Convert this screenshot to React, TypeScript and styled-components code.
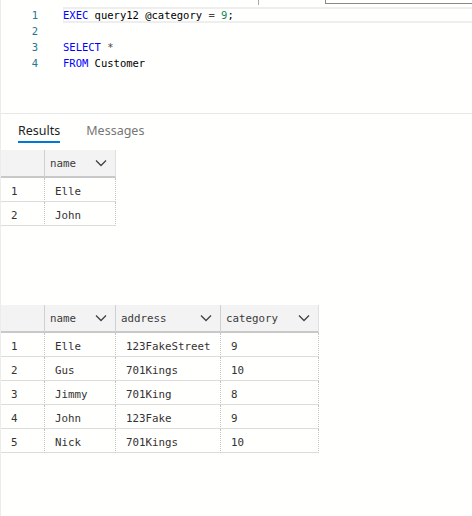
import React from 'react';
import styled, { createGlobalStyle } from 'styled-components';

const GlobalStyle = createGlobalStyle`
  html, body {
    margin: 0;
    padding: 0;
    background: #fffffe;
  }
`;

const mono = `"DejaVu Sans Mono", "Liberation Mono", monospace`;

interface Column {
  title: string,
  width: number
}

interface Grid {
  columns: Column[],
  rows: string[][]
}

const firstGrid: Grid = {
  columns: [{ title: 'name', width: 71 }],
  rows: [['Elle'], ['John']]
};

const secondGrid: Grid = {
  columns: [
    { title: 'name', width: 71 },
    { title: 'address', width: 105 },
    { title: 'category', width: 98 }
  ],
  rows: [
    ['Elle', '123FakeStreet', '9'],
    ['Gus', '701Kings', '10'],
    ['Jimmy', '701King', '8'],
    ['John', '123Fake', '9'],
    ['Nick', '701Kings', '10']
  ]
};

const Chevron = () => (
  <svg width="12" height="8" viewBox="0 0 12 8" fill="none">
    <path d="M1 1.5 L6 6.5 L11 1.5" stroke="#424242" strokeWidth="1.3" />
  </svg>
);

const DataGrid = ({ grid }: { grid: Grid }) => (
  <Table>
    <colgroup>
      <col style={{ width: 44 }} />
      {grid.columns.map(col => (
        <col key={col.title} style={{ width: col.width }} />
      ))}
    </colgroup>
    <thead>
      <tr>
        <HeadCell>
          <HeadInner />
        </HeadCell>
        {grid.columns.map(col => (
          <HeadCell key={col.title}>
            <HeadInner>
              <span>{col.title}</span>
              <Chevron />
            </HeadInner>
          </HeadCell>
        ))}
      </tr>
    </thead>
    <tbody>
      {grid.rows.map((row, i) => (
        <tr key={i}>
          <Cell>{i + 1}</Cell>
          {row.map((value, j) => (
            <Cell key={j}>{value}</Cell>
          ))}
        </tr>
      ))}
    </tbody>
  </Table>
);

export default function App() {
  return (
    <Page>
      <GlobalStyle />
      <FindEdge />
      <FindBox />
      <Editor>
        <Line>
          <LineNo>1</LineNo>
          <Code current>
            <Kw>EXEC</Kw> query12 @category <Op>=</Op> <Num>9</Num>;
          </Code>
        </Line>
        <Line>
          <LineNo>2</LineNo>
          <Code />
        </Line>
        <Line>
          <LineNo>3</LineNo>
          <Code>
            <Kw>SELECT</Kw> <Op>*</Op>
          </Code>
        </Line>
        <Line>
          <LineNo>4</LineNo>
          <Code>
            <Kw>FROM</Kw> Customer
          </Code>
        </Line>
      </Editor>
      <Results>
        <Tabs>
          <Tab active>Results</Tab>
          <Tab>Messages</Tab>
        </Tabs>
        <DataGrid grid={firstGrid} />
        <Spacer />
        <DataGrid grid={secondGrid} />
      </Results>
    </Page>
  );
}

const Page = styled.div`
  position: relative;
  width: 471px;
  height: 516px;
  border-left: 1px solid #ececec;
  overflow: hidden;
  background: #fffffe;
`;

const FindEdge = styled.div`
  position: absolute;
  left: 257px;
  top: 0;
  width: 1px;
  height: 5px;
  background: #a8a8a8;
`;

const FindBox = styled.div`
  position: absolute;
  left: 324px;
  top: -2px;
  right: -2px;
  height: 5px;
  border-left: 1px solid #8a8a8a;
  border-bottom: 1px solid #8a8a8a;
`;

const Editor = styled.div`
  height: 106px;
  padding-top: 7px;
  border-bottom: 1px solid #e8e8e8;
  font-family: ${mono};
  font-size: 10.5px;
`;

const Line = styled.div`
  display: flex;
  height: 16px;
  align-items: stretch;
`;

const LineNo = styled.div`
  width: 37px;
  text-align: right;
  color: #237893;
  line-height: 16px;
  flex-shrink: 0;
`;

const Code = styled.div<{ current?: boolean }>`
  margin-left: 25px;
  flex: 1;
  line-height: 16px;
  white-space: pre;
  color: #000;
  box-shadow: ${props => props.current ? 'inset 0 2px 0 #eeeeee, inset 0 -2px 0 #eeeeee, inset 1px 0 0 #eeeeee' : 'none'};
`;

const Kw = styled.span`
  color: #0000ff;
`;

const Op = styled.span`
  color: #444;
`;

const Num = styled.span`
  color: #09885a;
`;

const Results = styled.div`
  display: flex;
  flex-direction: column;
  align-items: flex-start;
`;

const Tabs = styled.div`
  display: flex;
  gap: 26px;
  padding-left: 17px;
  height: 36px;
  font-family: "Noto Sans", "Open Sans", sans-serif;
  font-size: 12.5px;
`;

const Tab = styled.div<{ active?: boolean }>`
  padding-top: 8px;
  height: 19px;
  color: ${props => props.active ? '#1e1e1e' : '#767676'};
  border-bottom: 2px solid ${props => props.active ? '#0078d4' : 'transparent'};
`;

const Spacer = styled.div`
  height: 79px;
`;

const Table = styled.table`
  border-collapse: separate;
  border-spacing: 0;
  table-layout: fixed;
  font-family: ${mono};
  font-size: 10.8px;
  color: #333;
`;

const HeadCell = styled.th`
  padding: 0;
  background: #f3f3f3;
  border-bottom: 2px solid #c8c8c8;
  border-right: 1px solid #d0d0d0;
  font-weight: normal;
  text-align: left;
  box-sizing: border-box;
  &:last-child {
    border-right-color: #e0e0e0;
  }
`;

const HeadInner = styled.div`
  display: flex;
  align-items: center;
  justify-content: space-between;
  height: 26px;
  padding: 0 8px 0 5px;
  color: #3b3b3b;
`;

const Cell = styled.td`
  height: 20px;
  padding: 3px 0 0 10px;
  box-sizing: content-box;
  border-bottom: 1px solid #dcdcdc;
  border-right: 1px dotted #c4c4c4;
  white-space: nowrap;
  overflow: hidden;
`;
